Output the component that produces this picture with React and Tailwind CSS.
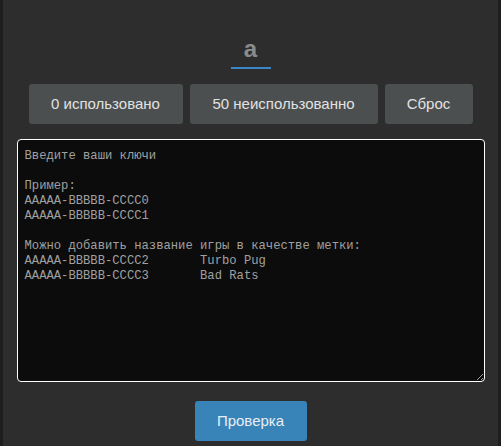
export default function App() {
  const text = `Введите ваши ключи

Пример:
AAAAA-BBBBB-CCCC0
AAAAA-BBBBB-CCCC1

Можно добавить название игры в качестве метки:
AAAAA-BBBBB-CCCC2\tTurbo Pug
AAAAA-BBBBB-CCCC3\tBad Rats`;
  return (
    <div className="w-[501px] h-[446px] bg-[#1e1e1e] flex justify-center overflow-hidden">
      <div className="w-[495px] h-full bg-[#2d2d2d] flex flex-col items-center" style={{ fontFamily: '"Liberation Sans", Arial, sans-serif' }}>
        <div className="mt-[35px] h-[30px] flex flex-col items-center">
          <div className="text-[24px] leading-[28px] font-bold text-[#8b8b8b]">a</div>
        </div>
        <div className="w-[40px] h-[2px] bg-[#3a86c8] mt-[2px]" />
        <div className="mt-[15px] flex gap-[7px]">
          <button className="w-[154px] h-[40px] rounded-[3px] bg-[#4b4f4f] text-[#e2e2e2] text-[15px]">0 использовано</button>
          <button className="w-[188px] h-[40px] rounded-[3px] bg-[#4b4f4f] text-[#e2e2e2] text-[15px]">50 неиспользованно</button>
          <button className="w-[88px] h-[40px] rounded-[3px] bg-[#4b4f4f] text-[#e2e2e2] text-[15px]">Сброс</button>
        </div>
        <textarea
          readOnly
          className="mt-[15px] w-[468px] h-[243px] bg-[#0c0c0c] border border-white rounded-[4px] px-[7px] pt-[9px] text-[12.2px] leading-[15px] text-[#a0a0a0] outline-none"
          style={{ fontFamily: '"Liberation Mono", monospace', tabSize: 8 }}
          defaultValue={text}
        />
        <button className="mt-[19px] w-[112px] h-[40px] rounded-[3px] bg-[#3883b8] text-[#e8eef4] text-[15px]">Проверка</button>
      </div>
    </div>
  );
}
